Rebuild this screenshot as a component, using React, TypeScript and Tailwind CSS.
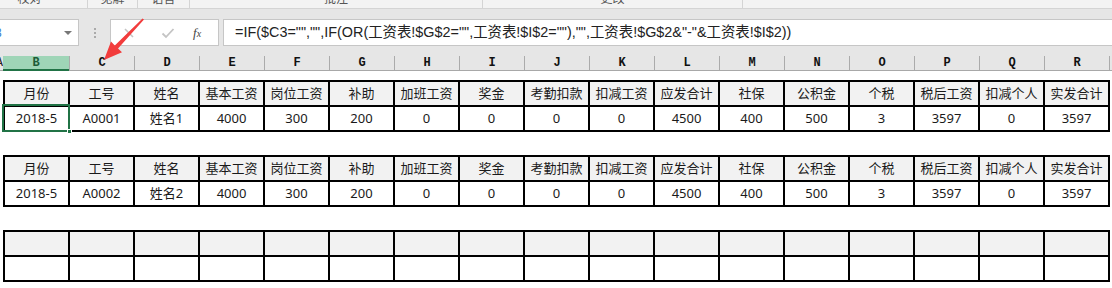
import React from "react";

const cols = ["B","C","D","E","F","G","H","I","J","K","L","M","N","O","P","Q","R"];
const headers = ["月份","工号","姓名","基本工资","岗位工资","补助","加班工资","奖金","考勤扣款","扣减工资","应发合计","社保","公积金","个税","税后工资","扣减个人","实发合计"];
const row = (id: string, name: string) => ["2018-5", id, name, "4000","300","200","0","0","0","0","4500","400","500","3","3597","0","3597"];

function Table({ head, data, selected }: { head: string[]; data: string[]; selected?: boolean }) {
  return (
    <div className="relative ml-[3px] w-[1107px] grid grid-cols-[repeat(17,63px)] gap-[2px] bg-black p-[2px]">
      {head.map((h, i) => (
        <div key={"h" + i} className="h-[23px] bg-[#f2f2f2] flex items-center justify-center text-[13px] text-[#1a1a1a]">{h}</div>
      ))}
      {data.map((d, i) => (
        <div key={"d" + i} className="h-[23px] bg-white flex items-center justify-center text-[13px] text-[#1a1a1a]">{d}</div>
      ))}
      {selected && (
        <div className="absolute left-[-1px] top-[24px] w-[68px] h-[28px] border-2 border-[#217346]">
          <div className="absolute right-[-4px] bottom-[-4px] w-[5px] h-[5px] bg-[#217346] border border-white" />
        </div>
      )}
    </div>
  );
}

export default function App() {
  const sections = [
    { w: 116, label: "校对", ml: -28 },
    { w: 50, label: "见解" },
    { w: 52, label: "语音" },
    { w: 293, label: "批注" },
    { w: 260, label: "更改" },
    { w: 400, label: "" },
  ];
  return (
    <div className="relative w-[1112px] h-[288px] overflow-hidden bg-white" style={{ fontFamily: '"Noto Sans", "Noto Sans CJK SC", sans-serif' }}>
      {/* ribbon bottom */}
      <div className="h-[9px] bg-[#f3f3f3] border-b border-[#d4d4d4] flex overflow-hidden">
        {sections.map((s, i) => (
          <div key={i} className="shrink-0 border-r border-[#d4d4d4] flex justify-center overflow-hidden" style={{ width: s.w, marginLeft: s.ml ?? 0 }}>
            <span className="text-[12px] leading-[14px] mt-[-8px] text-[#555]">{s.label}</span>
          </div>
        ))}
      </div>
      {/* gray band + formula bar */}
      <div className="bg-[#e6e6e6] pt-[10px]">
        <div className="h-[27px] flex items-stretch">
          <div className="w-[79px] bg-white border border-l-0 border-[#c6c6c6] relative flex items-center overflow-hidden">
            <span className="text-[12px] text-[#3b7fd1] ml-[-6px]">B</span>
            <div className="absolute right-[6px] top-[11px] w-0 h-0 border-l-[4px] border-r-[4px] border-t-[4px] border-l-transparent border-r-transparent border-t-[#777]" />
          </div>
          <div className="w-[31px] flex flex-col items-center justify-center gap-[2px]">
            <div className="w-[2px] h-[2px] bg-[#aaa]" />
            <div className="w-[2px] h-[2px] bg-[#aaa]" />
            <div className="w-[2px] h-[2px] bg-[#aaa]" />
          </div>
          <div className="w-[109px] bg-white border border-[#c6c6c6] flex items-center">
            <svg width="12" height="12" viewBox="0 0 12 12" className="ml-[12px]">
              <path d="M2 2 L10 10 M10 2 L2 10" stroke="#c4c4c4" strokeWidth="1.6" />
            </svg>
            <svg width="14" height="12" viewBox="0 0 14 12" className="ml-[26px]">
              <path d="M1.5 6.5 L5 10 L12.5 2" stroke="#c4c4c4" strokeWidth="1.8" fill="none" />
            </svg>
            <span className="ml-[18px] text-[13px] italic text-[#444]" style={{ fontFamily: '"Liberation Serif", serif' }}>f<span className="text-[10px]">x</span></span>
          </div>
          <div className="w-[4px]" />
          <div className="flex-1 bg-white border border-r-0 border-[#c6c6c6] flex items-center pl-[11px]">
            <span className="text-[14.4px] text-[#222] whitespace-nowrap" style={{ fontFamily: '"Liberation Sans", "Noto Sans CJK SC", sans-serif' }}>
              =IF($C3="","",IF(OR(工资表!$G$2="",工资表!$I$2=""),"",工资表!$G$2&amp;"-"&amp;工资表!$I$2))
            </span>
          </div>
        </div>
        {/* column header row */}
        <div className="h-[25px] pt-[10px] flex border-b border-[#a8a8a8]">
          <div className="w-[3px] overflow-hidden flex justify-end">
            <span className="text-[12px] leading-[14px] text-[#222] shrink-0" style={{ fontFamily: '"Liberation Mono", monospace' }}>A</span>
          </div>
          {cols.map((c, i) => (
            <div
              key={c}
              className={
                i === 0
                  ? "w-[66px] bg-[#9fd5b7] border-b-2 border-[#217346] -mb-[1px] flex items-center justify-center text-[12px] text-[#1d5c38]"
                  : "w-[65px] border-l border-[#ababab] flex items-center justify-center text-[12px] text-[#111]"
              }
              style={{ fontFamily: '"Liberation Mono", monospace', fontWeight: 600 }}
            >
              {c}
            </div>
          ))}
          <div className="flex-1 border-l border-[#ababab]" />
        </div>
      </div>
      {/* sheet */}
      <div className="pt-[9px] flex flex-col gap-[23px]">
        <Table head={headers} data={row("A0001", "姓名1")} selected />
        <Table head={headers} data={row("A0002", "姓名2")} />
        <Table head={headers.map(() => "")} data={headers.map(() => "")} />
      </div>
      {/* red arrow */}
      <svg className="absolute left-0 top-0 pointer-events-none" width="1112" height="288">
        <polygon points="142.5,18.5 144,19.6 118,48.4 122,52.2 104,60 111,41.6 114.8,45.4" fill="#f23c3c" />
      </svg>
    </div>
  );
}
